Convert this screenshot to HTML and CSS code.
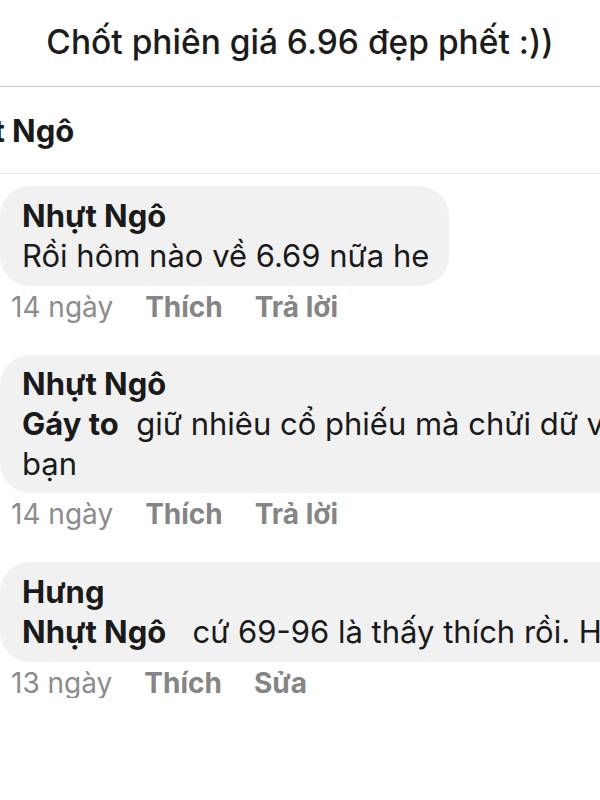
FILE: index.html
```html
<!DOCTYPE html>
<html lang="vi">
<head>
<meta charset="utf-8">
<title>Bình luận</title>
<link rel="stylesheet" href="styles.css">
</head>
<body>
<div class="screen">
  <header class="title">Chốt phiên giá 6.96 đẹp phết :))</header>
  <div class="thread-head"><span class="thread-name">Nhựt Ngô</span></div>
  <section class="comments">
    <article class="comment">
      <div class="bubble">
        <div class="author">Nhựt Ngô</div>
        <div class="text">Rồi hôm nào về 6.69 nữa he</div>
      </div>
      <div class="meta"><span class="time">14 ngày</span><span class="action">Thích</span><span class="action">Trả lời</span></div>
    </article>
    <article class="comment">
      <div class="bubble wide">
        <div class="author">Nhựt Ngô</div>
        <div class="text"><span class="tag">Gáy to</span>&nbsp; giữ nhiêu cổ phiếu mà chửi dữ vậy bạn</div>
      </div>
      <div class="meta"><span class="time">14 ngày</span><span class="action">Thích</span><span class="action">Trả lời</span></div>
    </article>
    <article class="comment">
      <div class="bubble nowrap">
        <div class="author">Hưng</div>
        <div class="text"><span class="tag">Nhựt Ngô</span>&nbsp;&nbsp; cứ 69-96 là thấy thích rồi. Hehe</div>
      </div>
      <div class="meta"><span class="time">13 ngày</span><span class="action">Thích</span><span class="action">Sửa</span></div>
    </article>
  </section>
</div>
</body>
</html>
```
FILE: styles.css
```css
html, body {
  margin: 0;
  padding: 0;
  background: #ffffff;
}
body {
  font-family: Inter, "Noto Sans", "Liberation Sans", sans-serif;
  color: #1a1a1a;
  width: 600px;
  height: 800px;
  overflow: hidden;
}
.screen {
  width: 600px;
  overflow: hidden;
}
.title {
  height: 87px;
  display: flex;
  align-items: center;
  justify-content: center;
  font-size: 33.5px;
  font-weight: 500;
  color: #1c1c1c;
  border-bottom: 1.5px solid #c8c8c8;
  box-sizing: border-box;
  padding-bottom: 2px;
  white-space: nowrap;
}
.thread-head {
  height: 87px;
  display: flex;
  align-items: center;
  border-bottom: 1.5px solid #e6e6e6;
  box-sizing: border-box;
  overflow: hidden;
}
.thread-name {
  margin-left: -70px;
  font-size: 31px;
  font-weight: 700;
  white-space: nowrap;
  color: #1a1a1a;
}
.comments {
  padding-top: 12px;
  display: flex;
  flex-direction: column;
  gap: 33px;
}
.comment {
  display: flex;
  flex-direction: column;
  align-items: flex-start;
}
.bubble {
  background: #f1f1f2;
  border-radius: 30px;
  padding: 10px 20px 10px 22px;
  font-size: 31px;
  line-height: 40px;
  box-sizing: border-box;
}
.bubble.wide {
  width: 700px;
  padding-top: 9px;
  padding-bottom: 9px;
}
.bubble.nowrap {
  width: 800px;
  white-space: nowrap;
}
.author, .tag {
  font-weight: 700;
}
.meta {
  display: flex;
  gap: 32px;
  margin-top: 6px;
  padding-left: 11px;
  font-size: 28px;
  line-height: 30px;
  color: #8c8c8c;
}
.action {
  font-weight: 700;
  color: #858585;
}
```
